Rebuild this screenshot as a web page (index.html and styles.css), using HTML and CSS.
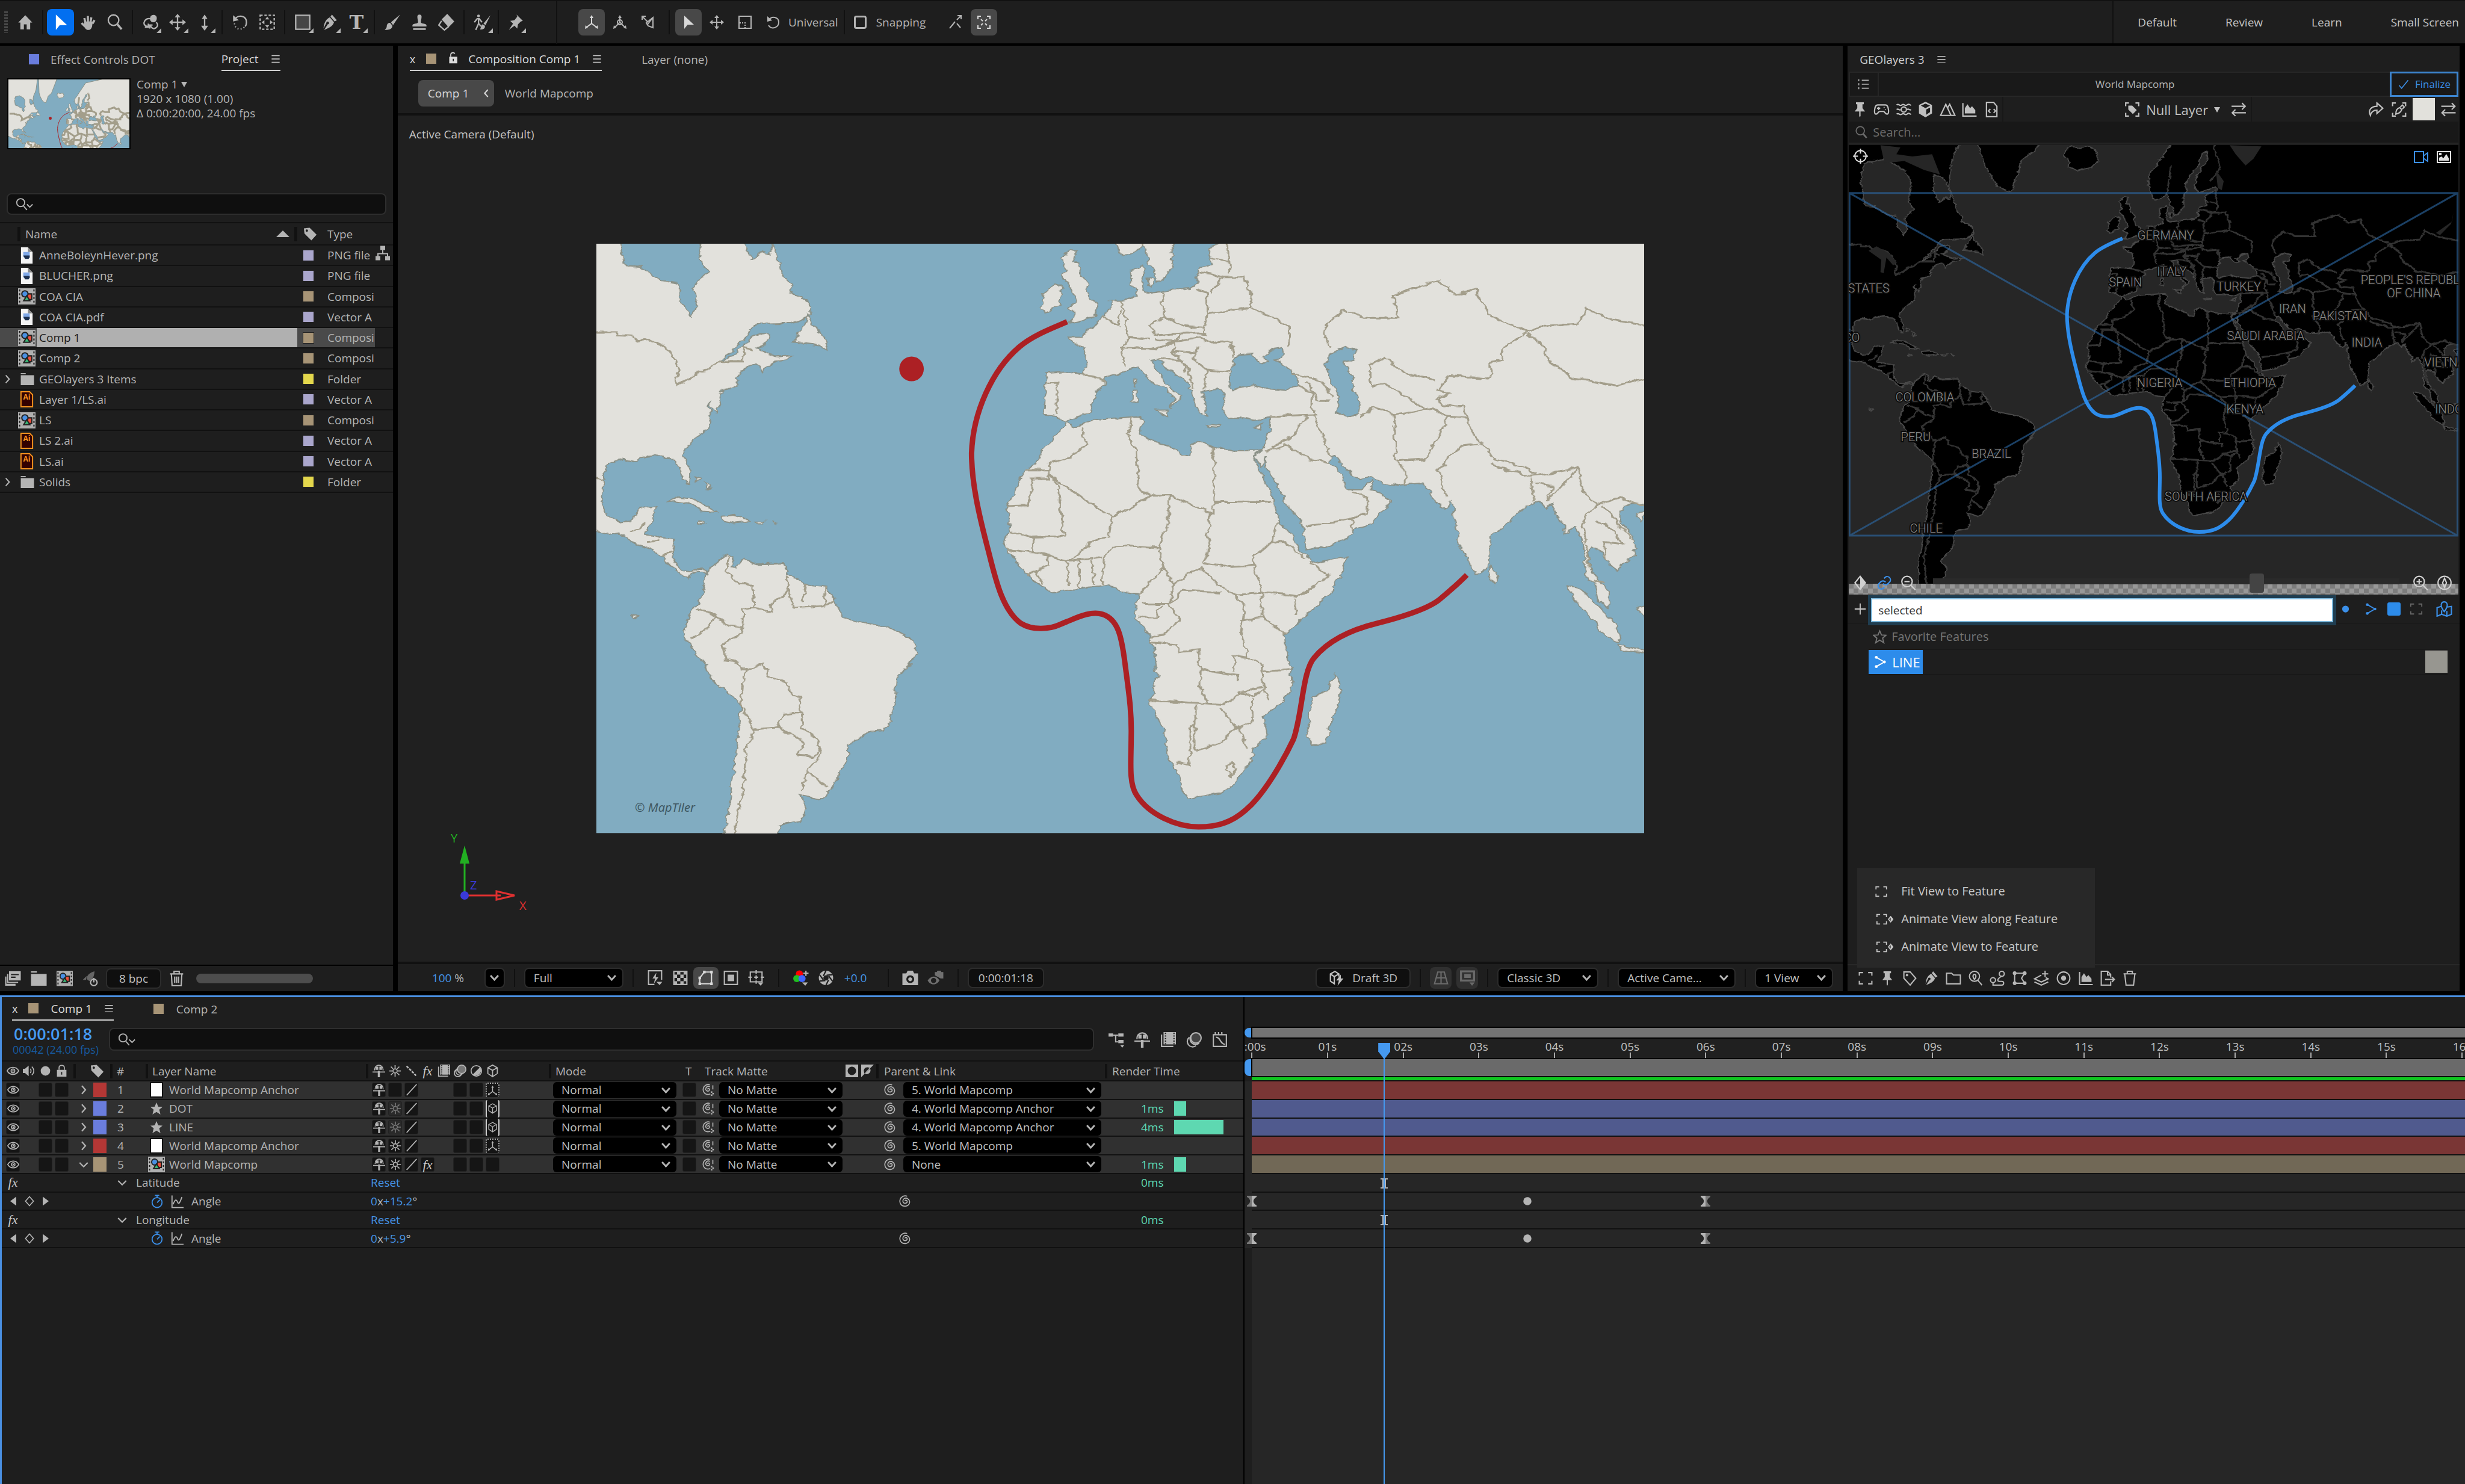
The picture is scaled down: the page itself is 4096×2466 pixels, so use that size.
FILE: index.html
```html
<!DOCTYPE html>
<html lang="en">
<head>
<meta charset="utf-8">
<title>Comp 1</title>
<link rel="stylesheet" href="styles.css">
</head>
<body>
<svg class="sprite" width="0" height="0" aria-hidden="true">
<defs>
<filter id="rough" x="-5%" y="-5%" width="110%" height="110%" color-interpolation-filters="sRGB"><feTurbulence type="fractalNoise" baseFrequency="0.06" numOctaves="3" seed="4" result="n"/><feDisplacementMap in="SourceGraphic" in2="n" scale="12" xChannelSelector="R" yChannelSelector="G"/></filter>
<g id="land" class="geo">
<path class="geo-land" d="M-60,-520 L320,-520 L300,-260 L287,-191 L275,-150 L267,-100 L262,-5 L270,30 L277,70 L283,105 L298,125 L294,150 L312,160 L322,180 L325,205 L310,220 L296,228 L246,230 L235,250 L215,290 L190,328 L205,318 L222,292 L240,262 L258,252 L263,262 L260,280 L243,292 L262,310 L275,315 L296,313 L290,322 L275,325 L262,340 L254,356 L250,340 L243,335 L222,352 L216,370 L216,392 L195,402 L190,415 L192,440 L184,462 L175,430 L178,465 L176,500 L165,515 L142,545 L138,570 L147,612 L146,645 L136,632 L132,605 L125,580 L110,578 L95,570 L72,575 L70,588 L50,580 L30,592 L20,615 L22,650 L18,690 L27,725 L45,745 L62,742 L72,710 L97,702 L92,740 L85,760 L82,775 L122,788 L123,820 L122,845 L135,868 L150,872 L165,862 L174,882 L162,870 L150,878 L145,887 L130,875 L118,855 L105,830 L90,812 L60,795 L45,770 L30,775 L10,768 L-60,700 Z
M320,205 L330,240 L345,265 L348,298 L335,285 L300,278 L305,255 L315,235 Z
M330,-520 L560,-520 L488,-191 L478,-167 L448,-126 L438,-78 L428,-21 L418,19 L387,-5 L367,-54 L347,-126 L337,-191 Z
M560,-180 L575,-185 L590,-175 L615,-185 L632,-170 L638,-120 L620,-90 L585,-78 L563,-95 L565,-120 L553,-140 Z
M112,692 L130,680 L150,682 L175,705 L188,718 L165,715 L150,695 L125,690 Z
M195,728 L215,725 L235,740 L215,746 L195,740 Z M243,742 L258,742 L256,748 L244,748 Z M160,740 L172,743 L170,748 L160,746 Z M270,742 L275,746 L272,750 Z
M155,625 L163,630 L158,640 Z M170,640 L178,652 L172,658 Z M64,982 L71,988 L66,994 Z
M172,875 L185,850 L205,825 L212,832 L208,860 L215,862 L225,840 L245,852 L285,850 L290,875 L315,905 L345,912 L360,940 L365,965 L372,990 L405,1005 L440,1015 L475,1050 L480,1085 L465,1120 L450,1150 L448,1210 L440,1260 L430,1283 L412,1285 L378,1322 L378,1360 L362,1410 L345,1455 L335,1462 L310,1448 L318,1490 L308,1518 L278,1528 L276,1560 L272,1605 L241,1659 L256,1690 L252,1724 L237,1800 L186,1800 L186,1670 L198,1548 L205,1470 L212,1380 L220,1260 L222,1218 L205,1185 L178,1150 L165,1100 L142,1050 L140,1010 L150,970 L165,940 L168,900 Z
M1600,-520 L1200,-520 L900,-400 L820,-191 L790,-110 L765,-54 L768,0 L775,35 L782,55 L800,40 L812,25 L818,60 L828,95 L830,122 L845,110 L853,80 L852,40 L862,20 L858,-20 L872,-60 L890,-100 L900,-150 L912,-160 L915,-130 L900,-90 L885,-50 L882,0 L895,20 L935,-5 L938,8 L912,30 L905,45 L912,75 L895,85 L890,120 L882,138 L845,145 L818,152 L810,135 L812,78 L793,95 L795,130 L803,155 L785,170 L765,170 L765,190 L755,205 L745,225 L738,240 L725,250 L722,265 L702,265 L708,280 L722,290 L728,330 L725,360 L700,355 L670,358 L668,400 L667,465 L682,468 L697,485 L712,472 L735,460 L740,410 L755,390 L755,368 L775,360 L800,345 L807,342 L812,358 L825,380 L845,400 L857,425 L852,450 L868,415 L860,405 L845,385 L828,345 L822,325 L835,322 L845,345 L868,370 L878,385 L885,420 L895,460 L905,470 L902,430 L898,405 L920,400 L932,412 L928,450 L935,475 L960,475 L975,480 L998,470 L998,500 L988,558 L972,572 L986,602 L992,570 L990,600 L1005,640 L1020,690 L1040,735 L1048,770 L1050,815 L1075,808 L1110,785 L1125,760 L1145,750 L1160,720 L1172,690 L1160,665 L1147,660 L1147,635 L1135,658 L1112,658 L1100,615 L1088,595 L1087,575 L1095,572 L1110,610 L1130,632 L1148,624 L1160,642 L1185,648 L1220,642 L1232,660 L1240,690 L1255,710 L1265,690 L1268,740 L1275,800 L1290,850 L1300,880 L1318,860 L1322,775 L1335,765 L1365,715 L1390,690 L1402,705 L1412,695 L1418,730 L1430,750 L1430,775 L1445,755 L1455,790 L1460,850 L1462,890 L1475,900 L1480,945 L1492,965 L1495,935 L1480,895 L1468,870 L1463,820 L1470,808 L1485,820 L1490,845 L1508,870 L1515,850 L1533,830 L1530,780 L1510,740 L1515,705 L1530,695 L1600,698 Z
M705,40 L715,42 L708,70 L720,72 L718,95 L730,130 L732,165 L745,180 L740,210 L722,222 L702,228 L715,205 L702,190 L712,170 L708,145 L695,110 L698,75 L692,60 Z
M680,125 L692,130 L688,185 L668,200 L662,190 L665,155 Z M817,112 L827,115 L825,132 L818,130 Z
M828,452 L846,452 L845,470 Z M796,402 L803,402 L802,435 L796,430 Z M798,370 L802,370 L800,395 Z M905,490 L925,493 L924,498 L906,496 Z M972,500 L988,488 L982,504 Z
M697,485 L712,498 L740,478 L805,470 L812,478 L808,515 L820,530 L848,545 L868,570 L880,572 L882,545 L892,535 L915,550 L945,560 L975,560 L988,555 L972,575 L985,620 L1000,670 L1010,745 L1028,770 L1042,815 L1060,850 L1110,832 L1105,870 L1085,930 L1050,985 L1020,1035 L1022,1090 L1030,1120 L1030,1180 L1010,1215 L988,1245 L993,1300 L972,1330 L970,1360 L940,1430 L925,1445 L880,1458 L868,1440 L865,1400 L848,1350 L840,1280 L822,1210 L832,1140 L828,1070 L820,1035 L800,990 L803,930 L782,925 L762,905 L720,915 L680,925 L650,895 L630,855 L612,815 L610,790 L617,760 L612,710 L625,650 L640,610 L660,580 L668,545 L690,510 Z
M1095,1138 L1102,1185 L1092,1240 L1078,1318 L1062,1320 L1052,1300 L1055,1260 L1060,1195 L1080,1180 Z
M1322,855 L1333,885 L1325,905 L1318,885 Z
M1432,910 L1450,915 L1480,960 L1505,1010 L1510,1055 L1490,1040 L1465,985 L1445,945 Z M1510,1060 L1546,1075 L1560,1085 L1515,1075 Z M1535,965 L1560,955 L1560,1022 Z M1534,725 L1548,712 L1540,745 Z"/>
<path class="geo-sea" d="M48,60 L55,80 L75,82 L108,120 L130,125 L132,165 L140,190 L148,212 L158,185 L152,130 L165,110 L174,95 L160,60 L165,23 L166,-30 L150,-80 L100,-130 L50,-110 L40,-40 Z M222,10 L237,62 L255,40 L265,50 L268,20 L250,-40 L225,-60 Z
M950,310 L972,308 L985,335 L995,328 L985,315 L1000,298 L1015,292 L1018,310 L1006,325 L1035,360 L1038,390 L1020,402 L990,398 L970,388 L940,402 L938,370 L945,340 Z
M1085,310 L1105,292 L1122,298 L1120,325 L1105,330 L1118,365 L1118,400 L1130,435 L1128,465 L1112,472 L1095,460 L1098,415 L1085,370 L1080,335 Z"/>
<path class="geo-line" d="M-20,252 L38,252 L42,260 L62,262 L72,275 L88,270 L112,292 L125,320 L132,350 L126,388 L150,370 L158,355 L172,350 L190,328 L225,328 L228,290 M225,290 L240,300 M10,630 L20,635 M60,770 L82,745 M85,795 L105,790 M105,830 L122,820
M205,830 L200,865 L208,890 L222,903 L240,905 L242,965 L225,970 L224,1030 M242,965 L265,975 L270,950 L285,935 L290,915 L290,880 M290,915 L300,965 L345,960 L345,912 M318,905 L312,950 M345,960 L362,945 M158,968 L185,985 L205,1012 L222,1015 L224,1030 L195,1060 L200,1100 L218,1105 L220,1125 L228,1125 M150,1045 L175,1015 L185,985 M228,1125 L255,1110 L260,1140 L290,1160 L295,1190 L308,1195 L310,1235 M228,1125 L226,1180 L222,1218 L232,1245 L240,1280 L230,1330 L225,1420 L213,1548 L200,1640 L205,1762 M240,1280 L275,1275 L285,1240 L310,1235 L312,1275 L330,1300 L340,1325 L330,1350 L308,1345 L315,1310 L275,1275 M340,1325 L335,1355 L318,1390 L312,1440 M318,1390 L348,1428
M720,500 L728,540 L705,575 L672,590 L672,612 M640,608 L672,608 M672,620 L765,730 L800,700 L822,675 L805,655 L802,560 L790,515 L797,470 M822,675 L850,675 L912,722 M915,550 L915,722 L910,722 L905,830 L898,850 M915,692 L1000,692 M765,730 L762,780 L735,795 L720,820 L700,845 M672,620 L687,645 L695,780 L650,782 L617,770 M672,608 L672,632 L648,632 L648,665 L640,700 L613,702 M850,675 L848,750 L835,810 L800,805 L765,808 L755,830 L752,905 M835,810 L842,860 L805,930 M842,860 L855,905 L850,955 M855,905 L895,860 L925,910 L945,930 L985,925 M898,850 L940,860 L975,855 L975,830 L1000,795 L1020,795 L1050,840 M1000,795 L1010,745 M985,925 L1040,935 L1085,880 L1055,850 M1035,940 L1035,985 M975,855 L985,925 M612,815 L650,822 L672,830 L675,855 L640,880 M672,830 L700,845 L752,835 M700,845 L702,910 M718,840 L718,912 M735,840 L740,905 M650,782 L650,822 M655,870 L665,905 M808,955 L850,955 L870,920 L925,925 M850,955 L865,1000 L840,1035 L822,1040 M805,990 L830,990 L838,960 M945,930 L960,960 L955,1040 L965,1095 L985,1110 L988,1180 L995,1205 M985,925 L985,990 L1020,1035 M955,1000 L985,990 M825,1055 L860,1060 L862,1080 L893,1075 L895,1125 L950,1140 L950,1155 M965,1095 L945,1090 L945,1130 M985,1130 L1028,1125 M895,1125 L895,1175 L908,1215 M822,1205 L930,1215 L955,1185 L975,1195 L990,1170 M950,1185 L985,1170 M887,1215 L887,1270 L880,1270 L880,1370 L860,1365 M887,1335 L920,1320 L950,1275 L972,1260 L972,1200 M887,1270 L887,1335 M925,1225 L950,1275 L965,1330 M932,1385 L940,1365 L948,1380 L940,1400 Z
M838,150 L842,210 L822,235 L830,260 L868,255 L900,255 L905,205 L905,150 L890,140 M842,210 L870,235 L900,240 M778,170 L785,210 L790,265 L822,270 M790,265 L780,300 L785,340 M750,210 L775,235 L778,195 M780,290 L830,295 L860,275 L895,265 L910,280 L940,275 L945,320 M830,270 L860,275 L855,300 L880,350 L885,400 M855,300 L890,305 M868,255 L860,275 M835,320 L870,325 L875,355 M895,290 L885,320 L905,350 L940,355 M905,350 L900,400 M905,205 L940,195 L970,190 L1000,210 L1025,240 L1025,290 M893,95 L930,110 L910,150 M930,110 L960,110 L970,160 L970,190 M910,60 L938,70 M935,0 L938,100 M725,360 L755,378 M685,383 L685,465 M670,383 L688,383 M822,-100 L812,25 M930,-191 L945,-80 L920,-30
M1038,390 L1060,410 L1060,450 L1065,465 L998,470 M1030,358 L1075,380 L1090,420 M1050,380 L1070,430 L1085,430 M1060,465 L1075,520 L1085,575 M1050,470 L1035,515 L1000,550 M1018,540 L1055,580 L1087,590 M992,560 L1020,545 M1120,765 L1115,735 L1050,755 M1115,735 L1140,720 L1140,680 L1118,665 M1130,470 L1150,445 L1180,465 L1182,580 L1195,610 L1195,645 M1182,585 L1225,580 L1245,520 L1258,470 L1235,450 L1180,465 M1085,290 L1075,250 L1085,220 L1105,195 L1135,215 L1185,215 L1180,155 L1245,118 L1270,155 L1298,140 L1320,210 L1375,250 L1340,290 L1338,325 L1320,330 L1320,372 L1260,365 L1245,400 M1375,250 L1400,235 L1450,230 L1460,190 L1500,220 L1580,245 M1375,255 L1400,290 L1405,325 L1440,370 L1505,390 L1580,360 M1145,395 L1145,335 L1165,318 L1200,360 L1240,375 M1145,395 L1165,385 L1225,450 M1258,470 L1290,475 L1290,510 L1310,540 L1325,580 L1378,605 L1385,620 M1240,400 L1262,410 L1240,425 L1250,440 L1280,445 L1290,480 M1320,590 L1330,600 L1378,625 L1405,620 L1450,600 M1380,630 L1385,690 M1385,640 L1412,650 L1405,690 M1305,540 L1275,545 L1245,610 L1255,680 M1450,600 L1455,660 L1475,700 L1510,680 L1546,700 M1405,690 L1425,650 L1450,600 M1475,700 L1455,740 L1465,860 M1475,740 L1500,760 L1515,800 L1488,795 L1490,840 M1485,700 L1530,790 M1470,890 L1488,900"/>
</g>
<path id="route" d="M700,225 C680,240 650,260 630,290 C590,350 562,460 560,565 C560,640 570,720 585,820 C595,890 605,970 632,1005 C650,1025 675,1020 690,1008 C715,990 735,972 752,982 C775,995 780,1040 785,1110 C790,1180 795,1230 794,1300 C794,1360 790,1420 802,1450 C820,1500 860,1532 893,1532 C930,1532 950,1510 970,1475 C995,1430 1020,1350 1032,1305 C1045,1240 1045,1130 1062,1095 C1085,1045 1120,1020 1155,1005 C1200,985 1230,965 1245,945 C1262,920 1275,900 1286,880"/>
</defs>
<symbol id="home" viewBox="0 0 24 24"><path class="f" d="M12 2 2 12.500h3V22h5v-7h4v7h5v-9.500h3z"/></symbol>
<symbol id="cursor" viewBox="0 0 24 24"><path class="f" d="M5 1v22l5.500-7H21z"/></symbol>
<symbol id="hand" viewBox="0 0 24 24"><path class="s3" d="M8.500 13 7 6M12 12V3M15.500 12.500 17 5M18.500 14l3-5M3 13l5 5"/><path class="f" d="M7 11h12l-1 7c-1 3-2.500 5-5.500 5S8 21 6 17z"/></symbol>
<symbol id="zoom" viewBox="0 0 24 24"><circle cx="10" cy="9" r="7.500"/><path class="s3" d="m15.500 15 6 7"/></symbol>
<symbol id="zoomv" viewBox="0 0 34 24"><circle cx="10" cy="9" r="7"/><path d="m15 15 6 7M21 12l5 5 5-5"/></symbol>
<symbol id="orbit" viewBox="0 0 24 24"><path class="f" d="M12 4c2-4 9-3 9 2 0 4-2 6-5 6s-6-3-4-8z"/><path d="M12 7C8 6 4 8 3 12c-1 3 2 6 6 6M20 12c4 3 2 8-3 9-3 0-4-2-5-4M9 14v5H4M11 21v-5h4"/></symbol>
<symbol id="pan" viewBox="0 0 24 24"><path d="M12 4v16M4 12h16"/><path class="f" d="m12 0 4 5H8zM12 24l4-5H8zM0 12l5-4v8zM24 12l-5-4v8z"/></symbol>
<symbol id="dolly" viewBox="0 0 24 24"><path d="M12 3v17"/><path class="f" d="m12 1 4 6H8zM12 24l5-7H7z"/></symbol>
<symbol id="rotate" viewBox="0 0 24 24"><path d="M5 7c4-6 16-5 16 5 0 3-1 5-2 6"/><path class="f" d="M2 2v9l8-2z"/><path stroke-dasharray="1.500 3" d="M18 19c-5 5-14 3-14-6"/></symbol>
<symbol id="undo" viewBox="0 0 24 24"><path d="M5 8c4-7 16-5 16 4s-12 13-17 5"/><path class="f" d="M2 2v9l8-2z"/></symbol>
<symbol id="anchorpt" viewBox="0 0 24 24"><path stroke-dasharray="3.500 2.500" d="M2 2h20v20H2z"/><path class="f" d="m12 4 3 4H9zM12 20l3-4H9zM4 12l4-3v6zM20 12l-4-3v6z"/></symbol>
<symbol id="rect" viewBox="0 0 24 24"><path fill="#454545" d="M2 2h20v20H2z"/></symbol>
<symbol id="pen" viewBox="0 0 24 24"><path class="f" d="M15 1l7 8-3 2-6-7zM12 5l6 7c-2 6-7 8-14 11l5-8a2 2 0 1 0-2-2L3 21C4 13 6 8 12 5z"/></symbol>
<symbol id="brush" viewBox="0 0 24 24"><path class="f" d="M23 1 10 12l3 4zM9 13c-3-1-5 2-5 5 0 2-2 4-3 5 6 0 11-1 11-6z"/></symbol>
<symbol id="stamp" viewBox="0 0 24 24"><path class="f" d="M9 4a3 3 0 1 1 6 0c0 3-1 5-1 8 0 2 8 2 8 4v2H2v-2c0-2 8-2 8-4 0-3-1-5-1-8zM3 20.500h18V23H3z"/></symbol>
<symbol id="eraser" viewBox="0 0 24 24"><path class="f" d="M13 0l10 11-8 8L5 8z"/><path d="m5 10-4 6 8 7 6-5"/></symbol>
<symbol id="roto" viewBox="0 0 24 24"><circle class="f" cx="7" cy="3" r="2"/><path d="M1 12l4-5h3l4 5M7 7v8M7 14l-4 9M8 14l2 4"/><path class="f" d="M24 2 14 14l3 2zM13 15c-3 0-2 5-4 7 4 1 8-1 7-5z"/></symbol>
<symbol id="pin" viewBox="0 0 24 24"><path class="f" d="m14 1 9 9-3 1-4 4-1 6-4-4-8 6 6-9-4-4 6-1 4-5z"/></symbol>
<symbol id="axis" viewBox="0 0 24 24"><path d="M12 14V3M12 14l-8 6M12 14l8 6"/><path class="f" d="m12 0 3 5H9zM1 23l1-6 4 4zM23 23l-1-6-4 4z"/></symbol>
<symbol id="axis2" viewBox="0 0 24 24"><circle cx="12" cy="12" r="4"/><path d="M12 12V3M12 12l-8 8M12 12l8 8"/><path class="f" d="m12 0 3 5H9zM1 23l1-6 4 4zM23 23l-1-6-4 4z"/></symbol>
<symbol id="axis3" viewBox="0 0 24 24"><path d="M3 3l8 8M20 4v17l-8-3-3-5zM2 8V2h6M10 17l10-13"/></symbol>
<symbol id="scalebox" viewBox="0 0 24 24"><path d="M2 2h20v20H2z"/><path stroke-dasharray="2 2" d="M3 13h9v9"/></symbol>
<symbol id="snapvec" viewBox="0 0 24 24"><path d="M14 8l7-7M15 1h6v6M2 22l9-11M14 14l6 7"/></symbol>
<symbol id="snapbox" viewBox="0 0 24 24"><path d="M2 7V2h5M17 2h5v5M22 17v5h-5M7 22H2v-5M7 7l3 3M17 7l-3 3M7 17l3-3M17 17l-3-3"/></symbol>
<symbol id="tag" viewBox="0 0 24 24"><path class="f" fill-rule="evenodd" d="M1 2l10-1 12 12-9 10L2 11zM6 4a2 2 0 1 0 .1 0z"/></symbol>
<symbol id="tree" viewBox="0 0 24 24"><path class="f" d="M8 0h8v7H8zM0 17h8v7H0zM16 17h8v7h-8z"/><path d="M12 7v6M4 18v-5h16v5"/></symbol>
<symbol id="png" viewBox="0 0 20 28"><path fill="#f4f4f4" stroke="none" d="M0 0h12l8 8v20H0z"/><path fill="#8a8a8a" stroke="none" d="M12 0l8 8h-8z"/><path fill="#7fa8e8" stroke="none" d="M4 8h11v9H4z"/><path fill="#1c3050" stroke="none" d="M4 14h11v3l-2 3H7z"/></symbol>
<symbol id="comp" viewBox="0 0 28 26"><path fill="#b0b0b0" stroke="none" d="M0 0h28v26H0z"/><path stroke="#222" stroke-dasharray="3 3" d="M2.500 2v24M25.500 2v24"/><path fill="#f0503c" stroke="#222" d="M14 9h8v9h-6z"/><circle fill="#4a90e2" stroke="#222" cx="11" cy="9" r="5"/><path fill="#3cb878" stroke="#222" d="m14 12 5 8H9z"/></symbol>
<symbol id="ai" viewBox="0 0 22 28"><path fill="#300" stroke="#f7931e" d="M1 1h15l5 5v21H1z"/></symbol>
<symbol id="folder" viewBox="0 0 24 24"><path class="f" d="M0 1h9v2H0zM0 5h24v18H0z"/></symbol>
<symbol id="right" viewBox="0 0 24 24"><path class="s3" d="m8 3 8 9-8 9"/></symbol>
<symbol id="down" viewBox="0 0 24 24"><path class="s3" d="m3 8 9 9 9-9"/></symbol>
<symbol id="left" viewBox="0 0 24 24"><path class="s3" d="m16 3-8 9 8 9"/></symbol>
<symbol id="tri" viewBox="0 0 24 24"><path class="f" d="M2 4h20L12 22z"/></symbol>
<symbol id="triup" viewBox="0 0 24 12"><path class="f" d="M0 12h24L12 0z"/></symbol>
<symbol id="menu" viewBox="0 0 24 24"><path d="M2 4h20M2 12h20M2 20h20"/></symbol>
<symbol id="lockopen" viewBox="0 0 24 24"><path class="f" fill-rule="evenodd" d="M3 10h16v13H3zM10 14v5h2v-5z"/><path d="M6 10V6c0-5 7-5 8-2"/></symbol>
<symbol id="lock" viewBox="0 0 24 24"><path class="f" fill-rule="evenodd" d="M3 10h18v13H3zM11 14v5h2v-5z"/><path d="M7 10V6c0-6 10-6 10 0v4"/></symbol>
<symbol id="interp" viewBox="0 0 24 24"><path class="f" d="M6 1h18v14H6zM3 5h2v12h15v2H3zM0 9h2v11h14v3H0z"/><path stroke="#222" d="M9 6h12M9 10h7"/></symbol>
<symbol id="rocket" viewBox="0 0 24 24"><path fill="#666" stroke="none" d="M18 1c-8 2-12 7-12 12l4 3c5-2 8-8 8-15zM6 8l-6 6h5z"/><circle cx="17" cy="18" r="5"/><path d="M17 11v7"/></symbol>
<symbol id="trash" viewBox="0 0 24 24"><path d="M2 5h20M8 4V1h8v3M4 6l1 17h14l1-17M9 9v10M12 9v10M15 9v10"/></symbol>
<symbol id="bolt" viewBox="0 0 24 24"><path d="M22 15V1H2v21h9"/><path class="f" d="m14 4-6 9h4l-2 8 7-10h-4zM14 18h9l-4 5z"/></symbol>
<symbol id="checker" viewBox="0 0 24 24"><path d="M2 2h20v20H2z"/><path class="f" d="M7 2h5v5H7zM17 2h5v5h-5zM2 7h5v5H2zM12 7h5v5h-5zM7 12h5v5H7zM17 12h5v5h-5zM2 17h5v5H2zM12 17h5v5h-5z"/></symbol>
<symbol id="mask" viewBox="0 0 24 24"><path d="M3 21V12l7-9h11v18z"/><path class="f" d="M1 19h4v4H1zM19 19h4v4h-4zM19 1h4v4h-4zM8 1h4v4H8zM1 10h4v4H1z"/></symbol>
<symbol id="roi" viewBox="0 0 24 24"><path d="M2 2h20v20H2z"/><path class="f" d="M7 7h10v10H7z"/></symbol>
<symbol id="guides" viewBox="0 0 24 24"><path d="M3 3h18v15H3zM12 0v6M12 8v6M12 16v5M0 11h5M9 11h6M19 11h5"/><path class="f" d="M14 19h9l-4 5z"/></symbol>
<symbol id="rgb" viewBox="0 0 24 24"><circle fill="red" stroke="none" cx="10" cy="6" r="5.500"/><circle fill="#1fbf1f" stroke="none" cx="6" cy="13" r="5.500"/><circle fill="#3f66ff" stroke="none" cx="14" cy="13" r="5.500"/><path d="M16 5h8M20 1v8"/><path class="f" d="M14 19h9l-4 5z"/></symbol>
<symbol id="shutter" viewBox="0 0 24 24"><circle class="f" cx="12" cy="12" r="11"/><path stroke="#1e1e1e" d="m12 1-4 8M22 7l-9 1M22 17l-6-8M12 23l4-8M2 17l9-1M2 7l6 8"/><circle cx="12" cy="12" r="4" fill="#1e1e1e" stroke="none"/></symbol>
<symbol id="camera" viewBox="0 0 24 24"><path class="f" fill-rule="evenodd" d="M0 5h6l2-4h8l2 4h6v18H0zM12 8a6 6 0 1 0 .1 0zM12 11a3 3 0 1 1-.1 0z"/></symbol>
<symbol id="showsnap" viewBox="0 0 24 24"><g opacity=".55"><path class="f" fill-rule="evenodd" d="M0 16c5-8 14-8 18 0-4 8-14 8-18 0zM9 12a4 4 0 1 0 .1 0z"/><path class="f" d="M11 3h3l1-2h5l1 2h3v10h-4l-9-5z"/></g></symbol>
<symbol id="cubebolt" viewBox="0 0 24 24"><path d="M9 2 2 6v11l6 4V10l7-4zM2 6l6 4M15 6v4"/><path class="f" d="m18 7-7 9h4l-2 8 9-11h-4z"/></symbol>
<symbol id="ground" viewBox="0 0 24 24"><path d="M7 3h10l5 18H2zM5 12h14M12 3v18"/></symbol>
<symbol id="extview" viewBox="0 0 24 24"><path class="s3" d="M2 2h20v14H2z"/><path class="f" d="M7 6h10v6H7zM15 19h8l-4 5z"/></symbol>
<symbol id="list" viewBox="0 0 24 24"><path d="M8 4h14M8 12h14M8 20h14M2 2v4M2 10v4M2 18v4"/></symbol>
<symbol id="check" viewBox="0 0 24 24"><path d="m3 14 5 6L21 4"/></symbol>
<symbol id="thumbtack" viewBox="0 0 24 24"><path class="f" d="M6 1h12v3h-2v6l4 5H13v7l-1 2-1-2v-7H4l4-5V4H6z"/></symbol>
<symbol id="pad" viewBox="0 0 24 24"><path d="M6 5h12c5 0 6 13 3 14s-4-4-6-4H9c-2 0-3 5-6 4S1 5 6 5zM5 10h5M7.500 8v5M16 8v1M18 11v1"/></symbol>
<symbol id="waves" viewBox="0 0 24 24"><path d="M1 5c4-3 4 3 8 0s4 3 8 0 4 1 6 0M1 19c4-3 4 3 8 0s4 3 8 0 4 1 6 0M1 12c3-2 4 2 6 0M17 12c3-2 4 2 6 0"/><circle cx="12" cy="12" r="4"/></symbol>
<symbol id="cube" viewBox="0 0 24 24"><path class="f" fill-rule="evenodd" d="m12 0 10 5v13l-10 6-10-6V5zM5 6l7 4 7-4-7-3zM13 12v8l6-4V9z"/></symbol>
<symbol id="mount" viewBox="0 0 24 24"><path d="M1 21 9 4l8 17zM12 9l3-5 8 17h-6"/></symbol>
<symbol id="chart" viewBox="0 0 24 24"><path d="M2 2v20h21"/><path class="f" d="M5 18v-8l4-6 4 6 3-3 5 6v5z"/></symbol>
<symbol id="codefile" viewBox="0 0 24 24"><path d="M4 1h11l5 6v16H4zM10 11l-3 3 3 3M15 11l3 3-3 3"/></symbol>
<symbol id="pinbox" viewBox="0 0 24 24"><path d="M2 7V2h5M17 2h5v5M22 17v5h-5M7 22H2v-5"/><path class="f" d="M6 6h6l7 7-6 6-7-7z"/></symbol>
<symbol id="penbox" viewBox="0 0 24 24"><path d="M2 7V2h5M17 2h5v5M22 17v5h-5M7 22H2v-5M7 19c0-6 2-9 6-10l3 3c-1 4-4 6-9 7zM14 8l3-3 3 3-3 3"/></symbol>
<symbol id="swap" viewBox="0 0 24 24"><path d="M1 7h21M17 2l5 5-5 5M23 17H2M7 12l-5 5 5 5"/></symbol>
<symbol id="share" viewBox="0 0 24 24"><path d="M14 2l9 8-9 8v-5C8 13 5 16 4 21 0 13 5 7 14 7z"/></symbol>
<symbol id="cross" viewBox="0 0 24 24"><circle cx="12" cy="12" r="9"/><path d="M12 0v8M12 16v8M0 12h8M16 12h8"/></symbol>
<symbol id="video" viewBox="0 0 24 24"><path d="M1 3h15v18H1zM16 10l7-5v14l-7-5"/></symbol>
<symbol id="image" viewBox="0 0 24 24"><path d="M1 3h22v18H1z"/><path class="f" d="M4 18v-5l4-2 3 3 5-7 4 7v4zM4 5h4v4H4z"/></symbol>
<symbol id="keydia" viewBox="0 0 24 24"><path d="m12 2 8 10-8 10-8-10z"/><path class="f" d="m12 2 8 10-8 10z"/></symbol>
<symbol id="dia" viewBox="0 0 24 24"><path d="m12 3 8 9-8 9-8-9z"/></symbol>
<symbol id="link" viewBox="0 0 24 24"><path d="M10 13a5 5 0 0 0 7.500.5l3-3a5 5 0 0 0-7-7L11.700 5.200M14 11a5 5 0 0 0-7.500-.5l-3 3a5 5 0 0 0 7 7l1.700-1.700"/></symbol>
<symbol id="zin" viewBox="0 0 24 24"><circle cx="10" cy="10" r="8"/><path d="m16 16 7 7M6 10h8M10 6v8"/></symbol>
<symbol id="zout" viewBox="0 0 24 24"><circle cx="10" cy="10" r="8"/><path d="m16 16 7 7M6 10h8"/></symbol>
<symbol id="compass" viewBox="0 0 24 24"><circle cx="12" cy="12" r="10"/><path d="m12 5 3 7-3 7-3-7z"/></symbol>
<symbol id="plus" viewBox="0 0 24 24"><path d="M12 2v20M2 12h20"/></symbol>
<symbol id="node" viewBox="0 0 24 24"><path d="m5 4 14 8-14 8"/><circle class="f" cx="5" cy="4" r="2.500"/><circle class="f" cx="5" cy="20" r="2.500"/><circle class="f" cx="19" cy="12" r="2.500"/></symbol>
<symbol id="frame" viewBox="0 0 24 24"><path d="M2 8V3h6M16 3h6v5M22 16v5h-6M8 21H2v-5"/></symbol>
<symbol id="framekey" viewBox="0 0 34 24"><path d="M2 8V3h6M14 3h6v5M20 16v5h-6M8 21H2v-5M28 7l4 5-4 5-4-5z"/><path class="f" d="m28 6 5 6-5 6z"/></symbol>
<symbol id="mappin" viewBox="0 0 24 24"><path d="M7 8 1 10v13l7-3 8 3 7-3V8l-6 1M8 14v6M16 15v8M12 16c-8-10-4-15 0-15s8 5 0 15z"/></symbol>
<symbol id="star" viewBox="0 0 24 24"><path d="m12 2 3 7 8 .5-6 5 2 8-7-4.500-7 4.500 2-8-6-5L9 9z"/></symbol>
<symbol id="starf" viewBox="0 0 24 24"><path class="f" d="m12 0 3.500 8.500 8.500.5-6.500 5.500L20 24l-8-5-8 5 2.500-9.500L0 9l8.500-.5z"/></symbol>
<symbol id="tagline" viewBox="0 0 24 24"><path d="M3 2h10l9 10-9 11L3 12z"/><circle class="f" cx="8" cy="7" r="2"/></symbol>
<symbol id="folderline" viewBox="0 0 24 24"><path d="M1 4h8l3 3h11v14H1z"/></symbol>
<symbol id="zpin" viewBox="0 0 24 24"><circle cx="10" cy="9" r="8"/><path d="m15 15 7 8M10 14c-4-5-2-8 0-8s4 3 0 8z"/></symbol>
<symbol id="path" viewBox="0 0 24 24"><circle cx="5" cy="15" r="4"/><circle cx="19" cy="5" r="4"/><path d="M5 19v4h14c4 0 4-6 0-6h-4c-4 0-3-5 4-8"/></symbol>
<symbol id="poly" viewBox="0 0 24 24"><path d="M4 4h16l-5 8 5 8H4z"/><circle class="f" cx="4" cy="4" r="3"/><circle class="f" cx="20" cy="4" r="3"/><circle class="f" cx="4" cy="20" r="3"/><circle class="f" cx="20" cy="20" r="3"/></symbol>
<symbol id="stack" viewBox="0 0 24 24"><path d="M12 7 1 13l11 5 11-5-4-2M1 18l11 5 11-5M18 0v10M13 5h10"/></symbol>
<symbol id="target" viewBox="0 0 24 24"><circle cx="12" cy="12" r="10"/><circle class="f" cx="12" cy="12" r="4"/></symbol>
<symbol id="export" viewBox="0 0 24 24"><path d="M17 17v6H2V1h10l5 5v5M12 1v6h5M8 14h15M19 10l4 4-4 4"/></symbol>
<symbol id="bin" viewBox="0 0 24 24"><path d="M2 5h20M8 4V1h8v3M4 6l2 17h12l2-17"/></symbol>
<symbol id="eye" viewBox="0 0 24 24"><path d="M1 12c5-9 17-9 22 0-5 9-17 9-22 0z"/><circle cx="12" cy="12" r="3.500"/><circle class="f" cx="12" cy="12" r="1.500"/></symbol>
<symbol id="sound" viewBox="0 0 24 24"><path class="f" d="M0 8h4l7-6v20l-7-6H0z"/><path d="M14 8c2 2 2 6 0 8M17 4c5 5 5 11 0 16"/></symbol>
<symbol id="dot" viewBox="0 0 24 24"><circle class="f" cx="12" cy="12" r="9"/></symbol>
<symbol id="shy" viewBox="0 0 24 24"><path d="M4 11C3-2 21-2 20 11M0 14h24"/><path class="f" d="M6 4h5v6H6zM13 4h5v6h-5zM10 12h4v12h-4z"/></symbol>
<symbol id="sun" viewBox="0 0 24 24"><circle cx="12" cy="12" r="4"/><path d="M12 1v6M12 17v6M1 12h6M17 12h6M4 4l4 4M20 4l-4 4M4 20l4-4M20 20l-4-4"/></symbol>
<symbol id="slash" viewBox="0 0 24 24"><path d="M22 1 2 23"/></symbol>
<symbol id="bslash" viewBox="0 0 24 24"><path class="s3" stroke-dasharray="5 2" d="m3 3 18 18"/></symbol>
<symbol id="film" viewBox="0 0 24 24"><path class="f" d="M5 0h19v19H5zM1 4h2v17h17v2H1z"/><path stroke="#222" stroke-dasharray="2 2" d="M8 1v18M21 1v18"/></symbol>
<symbol id="blur" viewBox="0 0 24 24"><circle cx="8" cy="16" r="7"/><circle cx="11" cy="13" r="7"/><circle cx="15" cy="9" r="8" fill="#777"/></symbol>
<symbol id="blurline" viewBox="0 0 24 24"><path d="M5 8a8 8 0 1 0 10 13M9 4a8 8 0 1 0 11 13"/><circle cx="15" cy="9" r="8" fill="#444"/></symbol>
<symbol id="adj" viewBox="0 0 24 24"><circle cx="12" cy="12" r="10"/><path class="f" d="M19 5A10 10 0 0 1 5 19z"/></symbol>
<symbol id="box3d" viewBox="0 0 24 24"><path d="m12 1 9 5v11l-9 6-9-6V6zM3 6l9 5 9-5M12 11v12"/></symbol>
<symbol id="spiral" viewBox="0 0 24 24"><path d="M12 12c-1-2 3-3 4 0 1 4-6 6-8 2-2-6 4-10 9-7 7 5 4 14-4 15C5 23 0 16 2 9 4 3 10 0 16 2"/></symbol>
<symbol id="spiralm" viewBox="0 0 24 24"><path d="M11 11c-1-2 3-3 3 0 1 4-5 5-7 1-1-5 4-9 8-6M16 20C7 24 0 17 2 9 4 3 10 0 15 2M21 3v8"/><path class="f" d="M17 15h3v3h-3zM20 18h3v3h-3zM17 21h3v3h-3z"/></symbol>
<symbol id="watch" viewBox="0 0 24 24"><circle cx="12" cy="14" r="9"/><path d="M12 14l5-5M8 1h8M12 1v4"/></symbol>
<symbol id="graph" viewBox="0 0 24 24"><path d="M2 1v22h21M4 17c4-10 6-9 8-4s4 2 8-9"/></symbol>
<symbol id="kleft" viewBox="0 0 24 24"><path class="f" d="M18 3v18L6 12z"/></symbol>
<symbol id="kright" viewBox="0 0 24 24"><path class="f" d="M6 3v18l12-9z"/></symbol>
<symbol id="hour" viewBox="0 0 16 18"><path class="f" d="M0 0h8v18H0v-2C7 12 7 6 0 2z"/><path fill="#777" stroke="none" d="M8 0h8v2c-7 4-7 10 0 14v2H8z"/></symbol>
<symbol id="hour2" viewBox="0 0 16 18"><path fill="#777" stroke="none" d="M0 0h8v18H0v-2C7 12 7 6 0 2z"/><path class="f" d="M8 0h8v2c-7 4-7 10 0 14v2H8z"/></symbol>
<symbol id="flow" viewBox="0 0 24 24"><path class="f" d="M0 2h7v5H0zM15 2h8v5h-8zM15 12h8v5h-8zM18 20h6l-3 4z"/><path d="M7 5h8M11 5v10h4"/></symbol>
<symbol id="grapheditor" viewBox="0 0 24 24"><path d="M2 4h20v18H2zM6 8c8 0 5 10 14 11M5 0v4M10 0v4M15 0v4"/></symbol>
<symbol id="matte1" viewBox="0 0 24 24"><path class="f" fill-rule="evenodd" d="M0 0h24v24H0zM12 4a8 8 0 1 0 .1 0z"/></symbol>
<symbol id="matte2" viewBox="0 0 24 24"><path class="f" fill-rule="evenodd" d="M0 0h24L0 24zM12 5c-5 0-7 4-7 7l1 5 10-11z"/><path class="f" d="M7 17l10-9c3 6-4 13-10 9z"/></symbol>
</svg>

<header class="toolbar panel">
  <span class="grip"></span>
  <button class="tool" aria-label="Home"><svg><use href="#home"/></svg></button><i class="sep"></i>
  <button class="tool active" aria-label="Selection"><svg><use href="#cursor"/></svg></button>
  <button class="tool" aria-label="Hand"><svg><use href="#hand"/></svg></button>
  <button class="tool" aria-label="Zoom"><svg><use href="#zoom"/></svg></button><i class="sep"></i>
  <button class="tool more" aria-label="Orbit"><svg><use href="#orbit"/></svg></button>
  <button class="tool more" aria-label="Pan"><svg><use href="#pan"/></svg></button>
  <button class="tool more" aria-label="Dolly"><svg><use href="#dolly"/></svg></button><i class="sep"></i>
  <button class="tool" aria-label="Rotation"><svg><use href="#rotate"/></svg></button>
  <button class="tool" aria-label="Anchor point"><svg><use href="#anchorpt"/></svg></button><i class="sep"></i>
  <button class="tool more" aria-label="Rectangle"><svg><use href="#rect"/></svg></button>
  <button class="tool more" aria-label="Pen"><svg><use href="#pen"/></svg></button>
  <button class="tool more type-tool">T</button><i class="sep"></i>
  <button class="tool" aria-label="Brush"><svg><use href="#brush"/></svg></button>
  <button class="tool" aria-label="Clone stamp"><svg><use href="#stamp"/></svg></button>
  <button class="tool" aria-label="Eraser"><svg><use href="#eraser"/></svg></button><i class="sep"></i>
  <button class="tool more" aria-label="Roto brush"><svg><use href="#roto"/></svg></button><i class="sep near"></i>
  <button class="tool more" aria-label="Puppet pin"><svg><use href="#pin"/></svg></button>
  <i class="sep tall"></i>
  <div class="tool-options">
    <button class="tool pressed" aria-label="Local axis"><svg><use href="#axis"/></svg></button>
    <button class="tool" aria-label="World axis"><svg><use href="#axis2"/></svg></button>
    <button class="tool" aria-label="View axis"><svg><use href="#axis3"/></svg></button><i class="sep"></i>
    <button class="tool pressed" aria-label="Universal select"><svg><use href="#cursor"/></svg></button>
    <button class="tool" aria-label="Position"><svg><use href="#pan"/></svg></button>
    <button class="tool" aria-label="Scale"><svg><use href="#scalebox"/></svg></button>
    <button class="tool" aria-label="Rotate"><svg><use href="#undo"/></svg></button>
    <span>Universal</span><i class="sep"></i>
    <label class="snap"><input type="checkbox">Snapping</label>
    <button class="tool snapopt" aria-label="Snap edges"><svg><use href="#snapvec"/></svg></button>
    <button class="tool pressed" aria-label="Snap features"><svg><use href="#snapbox"/></svg></button>
  </div>
  <nav class="spaces"><a href="#d">Default</a><a href="#r">Review</a><a href="#l">Learn</a><a href="#s">Small Screen</a></nav>
</header>

<main class="panels">
<section class="project panel">
  <div class="tabs">
    <a class="tab fx-tab" href="#fx"><i class="sw blue"></i>Effect Controls DOT</a>
    <a class="tab on" href="#p">Project<svg class="burger"><use href="#menu"/></svg></a>
  </div>
  <div class="info">
    <svg class="thumb geo-light" viewBox="-34 -475 1463 1452" preserveAspectRatio="none"><rect class="sea" x="-34" y="-475" width="1463" height="1452"/><use href="#land" filter="url(#rough)"/><use class="route thin" href="#route"/><ellipse class="dotmark" cx="472" cy="347" rx="18" ry="32"/></svg>
    <div>Comp 1<svg class="tiny"><use href="#tri"/></svg><br>1920 x 1080 (1.00)<br>Δ 0:00:20:00, 24.00 fps</div>
  </div>
  <div class="search"><svg><use href="#zoomv"/></svg><input type="text" aria-label="Search project"></div>
  <div class="files">
  <table>
    <colgroup><col class="c-name"><col class="c-tag"><col class="c-type"></colgroup>
    <thead><tr><th><span class="hname">Name<svg><use href="#triup"/></svg></span></th><th class="htag"><svg><use href="#tag"/></svg></th><th class="htype">Type</th></tr></thead>
    <tbody>
    <tr><td><div><svg class="ic png"><use href="#png"/></svg>AnneBoleynHever.png</div></td><td><i class="sw lav"></i></td><td>PNG file</td></tr>
    <tr><td><div><svg class="ic png"><use href="#png"/></svg>BLUCHER.png</div></td><td><i class="sw lav"></i></td><td>PNG file</td></tr>
    <tr><td><div><svg class="ic"><use href="#comp"/></svg>COA CIA</div></td><td><i class="sw tan"></i></td><td>Composi</td></tr>
    <tr><td><div><svg class="ic png"><use href="#png"/></svg>COA CIA.pdf</div></td><td><i class="sw lav"></i></td><td>Vector A</td></tr>
    <tr class="sel"><td><div><svg class="ic"><use href="#comp"/></svg><b>Comp 1</b></div></td><td><i class="sw tan"></i></td><td>Composi</td></tr>
    <tr><td><div><svg class="ic"><use href="#comp"/></svg>Comp 2</div></td><td><i class="sw tan"></i></td><td>Composi</td></tr>
    <tr><td><div class="fold"><svg class="arr"><use href="#right"/></svg><svg class="ic"><use href="#folder"/></svg>GEOlayers 3 Items</div></td><td><i class="sw yel"></i></td><td>Folder</td></tr>
    <tr><td><div><span class="ic ai"><svg><use href="#ai"/></svg><b>Ai</b></span>Layer 1/LS.ai</div></td><td><i class="sw lav"></i></td><td>Vector A</td></tr>
    <tr><td><div><svg class="ic"><use href="#comp"/></svg>LS</div></td><td><i class="sw tan"></i></td><td>Composi</td></tr>
    <tr><td><div><span class="ic ai"><svg><use href="#ai"/></svg><b>Ai</b></span>LS 2.ai</div></td><td><i class="sw lav"></i></td><td>Vector A</td></tr>
    <tr><td><div><span class="ic ai"><svg><use href="#ai"/></svg><b>Ai</b></span>LS.ai</div></td><td><i class="sw lav"></i></td><td>Vector A</td></tr>
    <tr><td><div class="fold"><svg class="arr"><use href="#right"/></svg><svg class="ic"><use href="#folder"/></svg>Solids</div></td><td><i class="sw yel"></i></td><td>Folder</td></tr>
    </tbody>
  </table>
  <svg class="flowicon"><use href="#tree"/></svg>
  </div>
  <footer class="pfoot">
    <button class="cell" aria-label="Interpret"><svg><use href="#interp"/></svg></button><button class="cell" aria-label="New folder"><svg><use href="#folder"/></svg></button><button class="cell" aria-label="New comp"><svg><use href="#comp"/></svg></button><button class="cell" aria-label="Acceleration"><svg><use href="#rocket"/></svg></button>
    <button class="box bpc">8 bpc</button>
    <button class="cell bin" aria-label="Delete"><svg><use href="#trash"/></svg></button><i class="scroll"></i>
  </footer>
</section>

<section class="comp panel">
  <div class="tabs">
    <a class="tab on" href="#c"><span class="x">x</span><i class="sw tan"></i><svg class="lk"><use href="#lockopen"/></svg>Composition Comp 1<svg class="burger"><use href="#menu"/></svg></a>
    <a class="tab layer-tab" href="#n">Layer (none)</a>
  </div>
  <div class="crumbs"><button class="crumb">Comp 1<svg><use href="#left"/></svg></button><a href="#w">World Mapcomp</a></div>
  <div class="canvas">
    <span class="camname">Active Camera (Default)</span>
    <div class="view">
      <svg class="geo-light" viewBox="10 23 1536 1525" preserveAspectRatio="none"><rect class="sea" x="10" y="23" width="1536" height="1525"/><use href="#land" filter="url(#rough)"/><use class="route" href="#route"/><ellipse class="dotmark" cx="472" cy="347" rx="18" ry="32"/></svg>
      <span class="credit">© MapTiler</span>
    </div>
    <svg class="gizmo" viewBox="0 0 140 140"><path stroke="#22b022" d="M31 105V40"/><path fill="#22b022" stroke="none" d="m31 22 8 30H23z"/><path stroke="#e03030" d="M31 105h60"/><path stroke="#e03030" fill="none" d="M84 98l30 7-30 7z"/><circle fill="#3a3ad8" stroke="none" cx="31" cy="105" r="7"/><text x="8" y="17" fill="#22b022">Y</text><text x="40" y="95" fill="#3a3ad8">Z</text><text x="122" y="129" fill="#e03030">X</text></svg>
  </div>
  <footer class="cfoot">
    <span class="mag"><b>100</b> %</span>
    <select class="sel-mini" aria-label="Magnification"><option></option></select><i class="sep"></i>
    <select class="sel-full" aria-label="Resolution"><option>Full</option></select><i class="sep"></i>
    <button class="cell" aria-label="Fast previews"><svg><use href="#bolt"/></svg></button><button class="cell" aria-label="Transparency"><svg><use href="#checker"/></svg></button><button class="cell lit" aria-label="Masks"><svg><use href="#mask"/></svg></button><button class="cell" aria-label="Region"><svg><use href="#roi"/></svg></button><button class="cell" aria-label="Guides"><svg><use href="#guides"/></svg></button><i class="sep"></i>
    <button class="cell" aria-label="Channels"><svg><use href="#rgb"/></svg></button><button class="cell" aria-label="Exposure"><svg><use href="#shutter"/></svg></button><b class="expo">+0.0</b><i class="sep"></i>
    <button class="cell" aria-label="Snapshot"><svg><use href="#camera"/></svg></button><button class="cell" aria-label="Show snapshot"><svg><use href="#showsnap"/></svg></button><i class="sep"></i>
    <button class="box time">0:00:01:18</button>
    <span class="grow"></span>
    <button class="box draft"><svg><use href="#cubebolt"/></svg>Draft 3D</button><i class="sep"></i>
    <button class="cell dim" aria-label="Ground plane"><svg><use href="#ground"/></svg></button><button class="cell dim" aria-label="Extended viewer"><svg><use href="#extview"/></svg></button><i class="sep"></i>
    <select class="sel-r" aria-label="Renderer"><option>Classic 3D</option></select><i class="sep"></i>
    <select class="sel-cam" aria-label="Camera"><option>Active Came...</option></select><i class="sep"></i>
    <select class="sel-view" aria-label="Views"><option>1 View</option></select>
  </footer>
</section>

<section class="geo3 panel">
  <div class="tabs"><a class="tab" href="#g">GEOlayers 3<svg class="burger"><use href="#menu"/></svg></a></div>
  <div class="gtitle"><button aria-label="List"><svg><use href="#list"/></svg></button><span>World Mapcomp</span><button class="finalize"><svg><use href="#check"/></svg>Finalize</button></div>
  <div class="gtools">
    <div class="gset"><svg><use href="#thumbtack"/></svg><svg><use href="#pad"/></svg><svg><use href="#waves"/></svg><svg><use href="#cube"/></svg><svg><use href="#mount"/></svg><svg><use href="#chart"/></svg><svg><use href="#codefile"/></svg></div>
    <div class="gnull"><svg><use href="#pinbox"/></svg>Null Layer<svg class="tiny"><use href="#tri"/></svg><svg class="sw-ic"><use href="#swap"/></svg></div>
    <div class="gend"><svg><use href="#share"/></svg><svg><use href="#penbox"/></svg><i></i><svg><use href="#swap"/></svg></div>
  </div>
  <label class="gsearch"><svg><use href="#zoom"/></svg><input type="text" placeholder="Search..."></label>
  <div class="gmap">
    <svg class="geo-dark" viewBox="10 -191 1536 1953" preserveAspectRatio="none"><rect class="sea" x="10" y="-191" width="1536" height="1953"/><use href="#land" filter="url(#rough)"/><path class="lake" d="M60,280 L80,260 L110,290 L130,330 L122,345 L105,310 L98,380 L90,375 L92,320 Z M970,-190 L1050,-185 L1030,-130 L1010,-100 L985,-150 Z M935,-80 L955,-30 L950,10 L940,0 Z M1490,200 L1530,150 L1534,110 L1528,160 L1500,210 Z M90,-190 L140,-180 L130,-150 L170,-140 L220,-150 L240,-60 L200,-80 L150,-120 L100,-110 L95,-150 Z"/><path class="frameline" d="M12,23 H1544 V1548 H12 Z M12,23 L1544,1548 M1544,23 L12,1548"/><use class="route blue" href="#route"/></svg>
    <svg class="names"><text x="52%" y="20.6%">GERMANY</text><text x="45.4%" y="31.3%">SPAIN</text><text x="53%" y="28.8%">ITALY</text><text x="64%" y="32.2%">TURKEY</text><text class="st" x="84%" y="30.7%">PEOPLE'S REPUBLIC</text><text x="92.7%" y="33.8%">OF CHINA</text><text class="en" x="6.7%" y="32.7%">STATES</text><text x="72.8%" y="37.3%">IRAN</text><text x="80.6%" y="38.9%">PAKISTAN</text><text x="68.4%" y="43.5%">SAUDI ARABIA</text><text x="85%" y="45%">INDIA</text><text class="st" x="94.4%" y="49.5%">VIETNAM</text><text x="51%" y="54.2%">NIGERIA</text><text x="65.8%" y="54.2%">ETHIOPIA</text><text x="65%" y="60.2%">KENYA</text><text class="st" x="96.2%" y="60.2%">INDONESIA</text><text x="12.5%" y="57.5%">COLOMBIA</text><text x="11%" y="66.5%">PERU</text><text x="23.4%" y="70.4%">BRAZIL</text><text x="58.6%" y="80.1%">SOUTH AFRICA</text><text x="12.7%" y="87.4%">CHILE</text><text class="en" x="1.8%" y="43.9%">MEXICO</text></svg>
    <svg class="ov tl"><use href="#cross"/></svg>
    <div class="ov tr"><svg class="bl"><use href="#video"/></svg><svg><use href="#image"/></svg></div>
  </div>
  <div class="gzoom"><svg><use href="#keydia"/></svg><svg class="bl"><use href="#link"/></svg><svg><use href="#zout"/></svg><input type="range" min="0" max="100" value="70" aria-label="Map zoom"><svg><use href="#zin"/></svg><svg><use href="#compass"/></svg></div>
  <div class="gfilter"><svg><use href="#plus"/></svg><input type="text" value="selected" aria-label="Filter features"><svg class="bl sm"><use href="#dot"/></svg><svg class="bl"><use href="#node"/></svg><i class="sq"></i><svg class="mute"><use href="#frame"/></svg><svg class="bl big"><use href="#mappin"/></svg></div>
  <ul class="feats">
    <li class="fav"><svg><use href="#star"/></svg>Favorite Features</li>
    <li><button class="line"><svg><use href="#node"/></svg>LINE</button><i></i></li>
  </ul>
  <div class="grow"></div>
  <div class="gfoot">
    <menu class="popup"><li><svg><use href="#frame"/></svg>Fit View to Feature</li><li><svg class="wide"><use href="#framekey"/></svg>Animate View along Feature</li><li><svg class="wide"><use href="#framekey"/></svg>Animate View to Feature</li></menu>
    <svg><use href="#frame"/></svg><svg><use href="#thumbtack"/></svg><svg><use href="#tagline"/></svg><svg><use href="#pen"/></svg><svg><use href="#folderline"/></svg><svg><use href="#zpin"/></svg><svg><use href="#path"/></svg><svg><use href="#poly"/></svg><svg><use href="#stack"/></svg><svg><use href="#target"/></svg><svg><use href="#chart"/></svg><svg><use href="#export"/></svg><svg><use href="#bin"/></svg>
  </div>
</section>
</main>

<section class="timeline">
<div class="tl-left">
  <div class="tabs">
    <a class="tab on" href="#c1"><span class="x">x</span><i class="sw tan"></i>Comp 1<svg class="burger"><use href="#menu"/></svg></a>
    <a class="tab c2" href="#c2"><i class="sw tan"></i>Comp 2</a>
  </div>
  <div class="tl-top">
    <div class="clock"><b>0:00:01:18</b><small>00042 (24.00 fps)</small></div>
    <div class="search"><svg><use href="#zoomv"/></svg><input type="text" aria-label="Search layers"></div>
    <div class="tl-btns"><svg><use href="#flow"/></svg><svg><use href="#shy"/></svg><svg><use href="#film"/></svg><svg><use href="#blurline"/></svg><svg><use href="#grapheditor"/></svg></div>
  </div>
  <div class="lrow head">
    <div class="av"><svg><use href="#eye"/></svg><svg><use href="#sound"/></svg><svg><use href="#dot"/></svg><svg><use href="#lock"/></svg></div>
    <div class="lab"><svg><use href="#tag"/></svg></div><div class="num">#</div><div class="nm">Layer Name</div>
    <div class="swi"><svg><use href="#shy"/></svg><svg><use href="#sun"/></svg><svg><use href="#bslash"/></svg><em>fx</em><svg><use href="#film"/></svg><svg><use href="#blur"/></svg><svg><use href="#adj"/></svg><svg><use href="#box3d"/></svg></div>
    <div class="mode">Mode</div><div class="tt">T</div><div class="trk"><span>Track Matte</span><svg><use href="#matte1"/></svg><svg><use href="#matte2"/></svg></div><div class="par">Parent &amp; Link</div><div class="ren">Render Time</div>
  </div>
  <div class="rows">
    <div class="lrow layer">
      <div class="av"><i class="well"><svg><use href="#eye"/></svg></i><i></i><i class="well"></i><i class="well"></i></div>
      <div class="lab"><svg><use href="#right"/></svg><i class="sw red"></i></div><div class="num">1</div><div class="nm"><i class="null"></i>World Mapcomp Anchor</div>
      <div class="swi"><i class="well"><svg><use href="#shy"/></svg></i><i class="well"></i><i class="well"><svg><use href="#slash"/></svg></i><i></i><i></i><i class="well"></i><i class="well"></i><i class="well dotted"><svg><use href="#axis"/></svg></i></div>
      <div class="mode"><select aria-label="Mode"><option>Normal</option></select></div><div class="tt"><i class="well"></i></div><div class="trk"><svg><use href="#spiralm"/></svg><select aria-label="Track matte"><option>No Matte</option></select></div><div class="par"><svg><use href="#spiral"/></svg><select aria-label="Parent"><option>5. World Mapcomp</option></select></div><div class="ren"></div>
    </div>
    <div class="lrow layer">
      <div class="av"><i class="well"><svg><use href="#eye"/></svg></i><i></i><i class="well"></i><i class="well"></i></div>
      <div class="lab"><svg><use href="#right"/></svg><i class="sw blue"></i></div><div class="num">2</div><div class="nm"><svg><use href="#starf"/></svg>DOT</div>
      <div class="swi"><i class="well"><svg><use href="#shy"/></svg></i><i class="well faint"><svg><use href="#sun"/></svg></i><i class="well"><svg><use href="#slash"/></svg></i><i></i><i></i><i class="well"></i><i class="well"></i><i class="well solid"><svg><use href="#box3d"/></svg></i></div>
      <div class="mode"><select aria-label="Mode"><option>Normal</option></select></div><div class="tt"><i class="well"></i></div><div class="trk"><svg><use href="#spiralm"/></svg><select aria-label="Track matte"><option>No Matte</option></select></div><div class="par"><svg><use href="#spiral"/></svg><select aria-label="Parent"><option>4. World Mapcomp Anchor</option></select></div><div class="ren"><span>1ms</span><i style="width:20px"></i></div>
    </div>
    <div class="lrow layer">
      <div class="av"><i class="well"><svg><use href="#eye"/></svg></i><i></i><i class="well"></i><i class="well"></i></div>
      <div class="lab"><svg><use href="#right"/></svg><i class="sw blue"></i></div><div class="num">3</div><div class="nm"><svg><use href="#starf"/></svg>LINE</div>
      <div class="swi"><i class="well"><svg><use href="#shy"/></svg></i><i class="well faint"><svg><use href="#sun"/></svg></i><i class="well"><svg><use href="#slash"/></svg></i><i></i><i></i><i class="well"></i><i class="well"></i><i class="well solid"><svg><use href="#box3d"/></svg></i></div>
      <div class="mode"><select aria-label="Mode"><option>Normal</option></select></div><div class="tt"><i class="well"></i></div><div class="trk"><svg><use href="#spiralm"/></svg><select aria-label="Track matte"><option>No Matte</option></select></div><div class="par"><svg><use href="#spiral"/></svg><select aria-label="Parent"><option>4. World Mapcomp Anchor</option></select></div><div class="ren"><span>4ms</span><i style="width:82px"></i></div>
    </div>
    <div class="lrow layer">
      <div class="av"><i class="well"><svg><use href="#eye"/></svg></i><i></i><i class="well"></i><i class="well"></i></div>
      <div class="lab"><svg><use href="#right"/></svg><i class="sw red"></i></div><div class="num">4</div><div class="nm"><i class="null"></i>World Mapcomp Anchor</div>
      <div class="swi"><i class="well"><svg><use href="#shy"/></svg></i><i class="well"><svg><use href="#sun"/></svg></i><i class="well"><svg><use href="#slash"/></svg></i><i></i><i></i><i class="well"></i><i class="well"></i><i class="well dotted"><svg><use href="#axis"/></svg></i></div>
      <div class="mode"><select aria-label="Mode"><option>Normal</option></select></div><div class="tt"><i class="well"></i></div><div class="trk"><svg><use href="#spiralm"/></svg><select aria-label="Track matte"><option>No Matte</option></select></div><div class="par"><svg><use href="#spiral"/></svg><select aria-label="Parent"><option>5. World Mapcomp</option></select></div><div class="ren"></div>
    </div>
    <div class="lrow layer">
      <div class="av"><i class="well"><svg><use href="#eye"/></svg></i><i></i><i class="well"></i><i class="well"></i></div>
      <div class="lab"><svg><use href="#down"/></svg><i class="sw tan"></i></div><div class="num">5</div><div class="nm"><svg class="cic"><use href="#comp"/></svg>World Mapcomp</div>
      <div class="swi"><i class="well"><svg><use href="#shy"/></svg></i><i class="well"><svg><use href="#sun"/></svg></i><i class="well"><svg><use href="#slash"/></svg></i><i class="well"><em>fx</em></i><i></i><i class="well"></i><i class="well"></i><i class="well"></i></div>
      <div class="mode"><select aria-label="Mode"><option>Normal</option></select></div><div class="tt"><i class="well"></i></div><div class="trk"><svg><use href="#spiralm"/></svg><select aria-label="Track matte"><option>No Matte</option></select></div><div class="par"><svg><use href="#spiral"/></svg><select aria-label="Parent"><option>None</option></select></div><div class="ren"><span>1ms</span><i style="width:20px"></i></div>
    </div>
    <div class="lrow"><div class="av"><em>fx</em></div><div class="prop"><svg><use href="#down"/></svg>Latitude</div><div class="val">Reset</div><div class="ren"><span>0ms</span></div></div>
    <div class="lrow"><div class="av"><svg><use href="#kleft"/></svg><svg><use href="#dia"/></svg><svg><use href="#kright"/></svg></div><div class="prop sub"><svg class="bl"><use href="#watch"/></svg><svg><use href="#graph"/></svg>Angle</div><div class="val">0<s>x</s>+15.2<s>°</s></div><div class="whip"><svg><use href="#spiral"/></svg></div></div>
    <div class="lrow"><div class="av"><em>fx</em></div><div class="prop"><svg><use href="#down"/></svg>Longitude</div><div class="val">Reset</div><div class="ren"><span>0ms</span></div></div>
    <div class="lrow"><div class="av"><svg><use href="#kleft"/></svg><svg><use href="#dia"/></svg><svg><use href="#kright"/></svg></div><div class="prop sub"><svg class="bl"><use href="#watch"/></svg><svg><use href="#graph"/></svg>Angle</div><div class="val">0<s>x</s>+5.9<s>°</s></div><div class="whip"><svg><use href="#spiral"/></svg></div></div>
  </div>
</div>
<div class="tl-right">
  <div class="nav"><i></i></div>
  <div class="ruler"><span>0:00s</span><span>01s</span><span>02s</span><span>03s</span><span>04s</span><span>05s</span><span>06s</span><span>07s</span><span>08s</span><span>09s</span><span>10s</span><span>11s</span><span>12s</span><span>13s</span><span>14s</span><span>15s</span><span>16s</span></div>
  <div class="work"><i></i></div>
  <div class="cache"></div>
  <div class="rows tracks">
    <div class="t-red"></div><div class="t-blue"></div><div class="t-blue"></div><div class="t-red"></div><div class="t-tan"></div>
    <div><b class="ibeam" style="left:10.9%"></b></div>
    <div><svg style="left:0"><use href="#hour2"/></svg><svg style="left:22.7%"><use href="#dot"/></svg><svg style="left:37.4%"><use href="#hour"/></svg></div>
    <div><b class="ibeam" style="left:10.9%"></b></div>
    <div><svg style="left:0"><use href="#hour2"/></svg><svg style="left:22.7%"><use href="#dot"/></svg><svg style="left:37.4%"><use href="#hour"/></svg></div>
  </div>
  <div class="below"></div>
  <div class="playhead"><i style="left:10.9%"></i></div>
</div>
</section>
</body>
</html>
```
FILE: styles.css
```css
* { box-sizing: border-box; }
body {
  margin: 0; height: 100vh; background: #000; color: #b4b4b4; overflow: hidden;
  font: 19px/24px "Open Sans", "Noto Sans", sans-serif;
  display: grid; grid-template-rows: 72px minmax(0, 1570fr) minmax(0, 813fr); row-gap: 7px;
}
a { color: inherit; text-decoration: none; }
button, input, select { font: inherit; color: inherit; border: 0; background: none; padding: 0; margin: 0; }
svg { flex: none; fill: none; stroke: currentColor; stroke-width: 2; display: block; overflow: visible; }
i { font-style: normal; flex: none; }
em { font: italic 22px/24px "Liberation Serif", serif; text-align: center; color: #c8c8c8; }
s { text-decoration: none; color: #b4b4b4; }
.f { fill: currentColor; stroke: none; }
.s3 { stroke-width: 3; }
.sprite { position: absolute; }
.panel { background: #1e1e1e; min-width: 0; }
.grow { flex: 1; }
.bl { color: #3b8fe8; }
.sep { width: 2px; height: 40px; background: #111; }

/* maps */
.geo path { vector-effect: non-scaling-stroke; }
.geo-land { fill: var(--land); stroke: var(--edge); }
.geo-sea { fill: var(--water); stroke: var(--edge); }
.geo-line { fill: none; stroke: var(--line); stroke-width: 3px; }
.geo-light { --land: #e2e1dc; --water: #81acc1; --edge: #8b9187; --line: #a39e8b; }
.geo-dark { --land: #000; --water: #262626; --edge: #484848; --line: #333; }
.sea { fill: var(--water); stroke: none; }
.lake { fill: #262626; stroke: none; }
#route { vector-effect: non-scaling-stroke; }
.route { stroke: #ac2024; stroke-width: 9px; }
.route.thin { stroke-width: 1px; }
.route.blue { stroke: #2d8ceb; stroke-width: 6px; }
.dotmark { fill: #ac2024; stroke: none; }
.frameline { stroke: #2d6aa8; stroke-opacity: .6; stroke-width: 3px; vector-effect: non-scaling-stroke; }

/* toolbar */
.toolbar { display: flex; align-items: center; padding: 0 10px 0 7px; border-top: 2px solid #111; }
.grip { width: 6px; height: 36px; margin-right: 6px; background: repeating-linear-gradient(#555 0 2px, transparent 2px 5px); }
.tool { width: 45px; height: 44px; display: grid; place-items: center; position: relative; border-radius: 8px; }
.tool svg { width: 28px; height: 28px; }
.toolbar .sep { margin: 0 6px; }
.toolbar .near { margin: 0 4px; }
.toolbar .tall { height: 72px; margin: 0 35px 0 46px; }
.tool.active { background: #026ff0; color: #fff; }
.tool.pressed { background: #484848; color: #d8d8d8; }
.more::after { content: ""; position: absolute; right: 4px; bottom: 4px; border: 4px solid; border-color: transparent #b4b4b4 #b4b4b4 transparent; }
.type-tool { font: bold 32px/40px "DejaVu Serif", serif; }
.tool-options { display: flex; align-items: center; }
.tool-options .tool { width: 44px; margin-right: 3px; }
.tool-options .sep { margin: 0 9px; }
.tool-options .tool svg { width: 24px; height: 26px; }
.snap { display: flex; align-items: center; gap: 16px; }
.snap input { appearance: none; width: 21px; height: 22px; border: 3px solid #b4b4b4; border-radius: 4px; margin-left: 6px; }
.tool-options .snapopt { margin-left: 28px; }
.spaces { margin-left: auto; display: flex; gap: 81px; align-items: center; height: 100%; border-left: 2px solid #111; padding-left: 40px; color: #c4c4c4; }

.panels { display: grid; grid-template-columns: 653fr 2402fr 1017fr; column-gap: 8px; padding-right: 9px; margin-top: -3px; min-height: 0; }
.panels > section { display: flex; flex-direction: column; min-height: 0; }

/* tabs */
.tabs { display: flex; height: 42px; align-items: flex-start; }
.tab { display: flex; align-items: center; height: 42px; padding-top: 3px; }
.tab.on { color: #dcdcdc; border-bottom: 2px solid #d0d0d0; }
.burger { width: 16px; height: 16px; margin-left: 20px; }
.sw { width: 19px; height: 19px; border: 1px solid #222; display: block; }
.sw.blue { background: #6a7ddd; }
.sw.tan { background: #a79476; }
.sw.red { background: #b43735; }
.sw.lav { background: #aaa6cc; }
.sw.yel { background: #e3d74c; }
.x { font-size: 18px; }
.tiny { width: 12px; height: 14px; display: inline-block; margin-left: 5px; }

/* project */
.project .fx-tab { margin-left: 47px; gap: 18px; }
.project .on { margin-left: 110px; }
.info { display: flex; gap: 10px; margin: 10px 0 0 12px; height: 120px; }
.thumb { width: 205px; height: 118px; margin-top: 2px; border: 2px solid #000; overflow: hidden; stroke-width: 1px; }
.search { display: flex; align-items: center; height: 36px; background: #0f0f0f; border: 2px solid #2e2e2e; border-radius: 8px; padding-left: 12px; }
.search svg { width: 32px; height: 23px; }
.search input { flex: 1; min-width: 0; height: 100%; }
.project .search { margin: 73px 11px 12px; }
.files { position: relative; }
.flowicon { position: absolute; right: 5px; top: 39px; width: 24px; height: 25px; }
table { width: 100%; height: 450px; border-collapse: collapse; table-layout: fixed; border-top: 2px solid #111; }
.c-name { width: 494px; }
.c-tag { width: 46px; }
th, td { padding: 0; text-align: left; font-weight: 400; overflow: hidden; white-space: nowrap; border-bottom: 2px solid #111; }
th { height: 37px; }
tbody td { height: 34px; }
.hname { display: flex; align-items: center; justify-content: space-between; margin-left: 29px; padding: 0 8px; border-left: 5px solid #111; border-right: 5px solid #111; }
.hname svg { width: 22px; height: 11px; }
.htag svg { width: 23px; height: 24px; margin-left: 10px; }
.htype { padding-left: 4px; }
td > div { display: flex; align-items: center; height: 29px; padding-left: 30px; }
td .ic { width: 29px; height: 27px; margin-right: 6px; display: block; }
td .ai { position: relative; }
td .ai svg { width: 29px; height: 27px; }
td .ai b { position: absolute; inset: 0; text-align: center; font: bold 12px/20px "Open Sans", sans-serif; color: #f7931e; }
td .fold { padding-left: 0; }
td .arr { width: 17px; height: 20px; margin: 0 9px 0 4px; stroke-width: 3; }
td .fold .ic { width: 25px; height: 22px; margin: 0 7px 0 3px; }
td .sw { margin-left: 9px; }
td:last-child { padding-left: 4px; }
tbody tr td:last-child { position: relative; }
tbody tr td:last-child::after { content: ""; position: absolute; right: 0; top: 0; bottom: -2px; width: 30px; background: #1e1e1e; }
.sel td { background: #4a4a4a; }
.sel b { font-weight: 400; background: #b0b0b0; color: #1a1a1a; flex: 1; height: 33px; line-height: 33px; padding-left: 4px; margin-left: -4px; }
.pfoot { margin-top: auto; display: flex; align-items: center; height: 44px; border-top: 2px solid #000; }
.cell { width: 42px; height: 36px; display: grid; place-items: center; border-radius: 8px; flex: none; }
.cell svg { width: 27px; height: 26px; }
.pfoot .cell { width: 43px; }
.pfoot .bin { width: 50px; }
.box { background: #0f0f0f; border: 2px solid #2c2c2c; border-radius: 8px; height: 34px; color: #c0c0c0; }
.bpc { width: 92px; margin-left: 4px; }
.scroll { width: 194px; height: 16px; border-radius: 8px; background: #4d4d4d; margin-left: 8px; }

/* composition */
.comp .on { margin-left: 20px; }
.comp .x { margin-right: 17px; }
.comp .lk { width: 20px; height: 22px; margin: 0 14px 4px 18px; }
.layer-tab { margin-left: 66px; }
.crumbs { display: flex; align-items: center; gap: 18px; height: 74px; padding: 4px 0 0 34px; border-bottom: 4px solid #111; }
.crumbs a { color: #b4b4b4; }
.crumb { display: flex; align-items: center; justify-content: space-between; background: #484848; color: #d8d8d8; border-radius: 8px; width: 126px; height: 44px; padding: 0 5px 0 16px; }
.crumb svg { width: 16px; height: 20px; }
.canvas { flex: 1; min-height: 0; background: #202020; display: grid; place-items: center; position: relative; }
.camname { position: absolute; left: 19px; top: 19px; color: #c4c4c4; }
.view { width: 72.5%; aspect-ratio: 16 / 9; position: relative; }
.view > svg { width: 100%; height: 100%; overflow: hidden; }
.credit { position: absolute; left: 64px; bottom: 31px; font: italic 20px/24px "Noto Sans", sans-serif; color: #3f5863; }
.gizmo { position: absolute; left: 80px; bottom: 75px; width: 140px; height: 140px; stroke-width: 3; }
.gizmo text { font-size: 20px; stroke: none; }
.cfoot { display: flex; align-items: center; height: 49px; border-top: 4px solid #111; padding: 0 16px 0 57px; flex: none; }
.cfoot .sep { height: 30px; margin: 0 15px; }
.mag { width: 87px; white-space: pre; }
.mag b, .expo { font-weight: 400; color: #4594e8; }
.expo { width: 37px; margin: 0 20px 0 9px; }
select { appearance: none; color: #c0c0c0; background: #000 url("data:image/svg+xml,%3Csvg xmlns='http://www.w3.org/2000/svg' viewBox='0 0 24 24'%3E%3Cpath d='m3 7 9 10 9-10' fill='none' stroke='%23b4b4b4' stroke-width='4'/%3E%3C/svg%3E") no-repeat right 9px center / 17px 17px; border-radius: 8px; }
.cfoot select { height: 34px; border: 2px solid #2c2c2c; padding-left: 14px; }
.cfoot .sel-mini { width: 34px; background-position: center; padding: 0; }
.sel-full { width: 165px; }
.sel-r { width: 168px; }
.sel-cam { width: 196px; }
.sel-view { width: 130px; }
.lit { background: #484848; color: #d8d8d8; }
.time { width: 127px; }
.draft { width: 158px; display: flex; align-items: center; justify-content: center; gap: 12px; }
.draft svg { width: 27px; height: 26px; }
.dim { width: 36px; background: #303030; color: #6a6a6a; }
.dim + .dim { margin-left: 8px; }

/* GEOlayers */
.geo3 .tabs { height: 43px; padding-left: 20px; color: #d0d0d0; }
.gtitle { display: flex; align-items: center; height: 42px; margin: 0 2px; background: #191919; border: 2px solid #262626; font-size: 17px; }
.gtitle > button { width: 48px; height: 38px; display: grid; place-items: center; border-right: 2px solid #262626; }
.gtitle svg { width: 20px; height: 20px; }
.gtitle span { flex: 1; text-align: center; }
.gtitle .finalize { width: 114px; height: 42px; border: 3px solid #3d85cf; color: #3b8fe8; display: flex; align-items: center; justify-content: center; gap: 9px; margin: -2px; }
.gtools { display: flex; height: 41px; align-items: center; font-size: 22px; color: #c0c0c0; }
.gtools svg { width: 27px; height: 26px; }
.gset { display: grid; grid-template-columns: repeat(7, 1fr); width: 259px; height: 100%; place-items: center; border-right: 2px solid #181818; padding-left: 2px; }
.gnull { display: flex; align-items: center; height: 100%; padding-right: 6px; margin-left: 200px; gap: 9px; border-right: 2px solid #181818; }
.gnull svg { width: 28px; }
.gtools .tiny { width: 12px; height: 14px; margin: 0; }
.gnull .sw-ic { margin-left: 7px; }
.gend { display: flex; align-items: center; gap: 12px; padding-right: 5px; margin-left: auto; }
.gend i { width: 37px; height: 37px; background: #e2e1dc; margin: 0 -3px; }
.gsearch { display: flex; align-items: center; gap: 8px; height: 37px; margin: 0 2px; background: #181818; border-bottom: 2px solid #242424; padding-left: 10px; color: #6c6c6c; font-size: 20px; }
.gsearch svg { width: 22px; height: 24px; }
.gsearch input { flex: 1; }
.gsearch input::placeholder { color: #6c6c6c; }
.gmap { position: relative; margin: 2px 2px 0; aspect-ratio: 1013 / 729; overflow: hidden; flex: none; }
.geo-dark, .names { position: absolute; inset: 0; width: 100%; height: 100%; overflow: hidden; }
.names text { font: 300 20px "Roboto", sans-serif; fill: #8c8c8c; stroke: #0c0c0c; stroke-width: 4px; paint-order: stroke; text-anchor: middle; dominant-baseline: central; }
.names .st { text-anchor: start; }
.names .en { text-anchor: end; }
.ov { position: absolute; color: #e0e0e0; }
.tl { left: 7px; top: 6px; width: 25px; height: 25px; }
.tr { right: 11px; top: 8px; display: flex; gap: 12px; }
.tr svg { width: 26px; height: 24px; }
.gzoom { display: flex; align-items: center; gap: 14px; height: 40px; margin: -21px 2px 0; padding: 0 10px 0 6px; position: relative; color: #d0d0d0; flex: none; }
.gzoom::before { content: ""; position: absolute; inset: 21px 0 1px; background: repeating-conic-gradient(#989898 0 25%, #7c7c7c 0 50%) 0 0 / 16px 16px; }
.gzoom svg, .gzoom input { position: relative; }
.gzoom svg { width: 26px; height: 27px; }
.gzoom input { flex: 1; appearance: none; height: 32px; margin: 0 8px 0 14px; background: linear-gradient(#2a2a2a, #2a2a2a) 0 8px / 100% 10px no-repeat; }
.gzoom input::-webkit-slider-thumb { appearance: none; width: 24px; height: 32px; border-radius: 4px; background: #444; }
.gfilter { display: flex; align-items: center; height: 48px; padding: 0 12px 0 10px; color: #c8c8c8; border-bottom: 2px solid #1a1a1a; flex: none; }
.gfilter svg { width: 22px; height: 24px; }
.gfilter input { flex: 1; min-width: 0; height: 40px; margin: 4px 13px 0 7px; background: #fff; color: #333; border: 2px solid #7db8dc; outline: 5px solid #1f3d50; padding-left: 10px; }
.gfilter .sm { width: 15px; }
.gfilter .sm + svg { margin: 0 16px 0 24px; }
.sq { width: 22px; height: 22px; background: #2d8ceb; border-radius: 3px; }
.gfilter .mute { color: #666; margin: 0 22px 0 15px; }
.gfilter .big { width: 27px; height: 26px; }
.feats { list-style: none; margin: 0; padding: 2px 20px 0 35px; font-size: 20px; }
.feats li { display: flex; align-items: center; justify-content: space-between; height: 42px; border-bottom: 2px solid #191919; }
.feats .fav { justify-content: flex-start; color: #757575; gap: 8px; padding-left: 7px; height: 41px; }
.feats svg { width: 23px; height: 24px; }
.feats .line { display: flex; align-items: center; gap: 8px; background: #2d8ceb; color: #fff; width: 90px; height: 40px; padding-left: 8px; font-size: 22px; }
.feats i { width: 37px; height: 37px; background: #979690; }
.gfoot { position: relative; display: grid; grid-template-columns: repeat(13, 1fr); width: 100%; padding: 0 530px 0 11px; height: 45px; place-items: center; border-top: 2px solid #282828; flex: none; color: #b8b8b8; }
.gfoot > svg { width: 26px; height: 25px; }
.popup { position: absolute; left: 16px; bottom: 39px; width: 395px; height: 166px; margin: 0; padding: 16px 29px 12px; background: #282828; font-size: 20px; color: #c8c8c8; list-style: none; display: grid; grid-auto-rows: 1fr; z-index: 1; }
.popup li { display: flex; align-items: center; }
.popup svg { width: 22px; height: 21px; margin-right: 22px; }
.popup .wide { width: 34px; margin-right: 10px; }

/* timeline */
.timeline { display: grid; grid-template-columns: 2067fr 2029fr; background: #1e1e1e; border-top: 3px solid #4a90e2; border-left: 3px solid #4a90e2; min-height: 0; }
.tl-left { display: flex; flex-direction: column; min-width: 0; border-right: 2px solid #000; }
.tl-left .on { margin-left: 17px; }
.tl-left .x { margin-right: 17px; }
.tl-left .on .sw { margin-right: 19px; }
.tl-left .tabs, .tl-left .tab { height: 39px; padding-top: 0; }
.c2 { margin-left: 65px; gap: 20px; }
.tl-top { display: flex; height: 66px; }
.clock { width: 178px; padding-left: 18px; color: #175a9f; white-space: nowrap; font-size: 18px; }
.clock b { display: block; font: 600 27px/28px "Open Sans", sans-serif; color: #4599f0; margin: 8px 0 0 2px; }
.clock small { font-size: 18px; line-height: 24px; }
.tl-top .search { flex: 1; margin-top: 12px; height: 38px; }
.tl-btns { display: flex; width: 248px; padding: 19px 0 0 23px; gap: 15px; }
.tl-btns svg { width: 28px; height: 26px; }
.lrow { display: grid; grid-template-columns: 119px 61px 59px 366px 304px 218px 30px 296px 380px 1fr; align-items: center; border-bottom: 2px solid #111; min-height: 0; }
.head { height: 35px; border-top: 2px solid #111; flex: none; }
.head > div { height: 24px; }
.head .num, .head .nm, .head .lab, .head .swi, .head .mode, .head .par, .head .ren { border-left: 4px solid #111; }
.rows { display: grid; grid-auto-rows: 1fr; height: 277px; flex: none; }
.layer { background: #303030; }
.av, .swi { display: grid; grid-auto-flow: column; grid-auto-columns: 27px; place-items: center; justify-content: start; align-items: center; }
.av { padding-left: 5px; }
.swi { padding-left: 8px; }
.head .swi { padding-left: 4px; }
.lrow svg { width: 20px; height: 20px; }
.av > *, .swi > * { height: 24px; }
.head .av svg, .head .swi svg { height: 23px; width: 21px; }
.well { width: 23px; height: 24px; background: #151515; border: 1px solid #222; border-radius: 3px; display: grid; place-items: center; }
.faint { background: #2a2a2a; color: #777; }
.dotted { border: 2px dotted #aaa; border-bottom: 0; }
.solid { border: 0 solid #ccc; border-width: 0 2px; }
.swi > .solid { height: 29px; }
.well.dotted svg { width: 17px; height: 19px; }
.well.solid svg { width: 17px; }
.lab { display: flex; align-items: center; gap: 6px; padding-left: 7px; }
.lab svg { width: 20px; height: 18px; }
.head .lab { padding-left: 24px; }
.head .lab svg { width: 23px; height: 24px; }
.lab .sw { width: 22px; height: 24px; border: 0; }
.num { padding-left: 12px; }
.head .num, .head .nm { padding-left: 7px; }
.nm { display: flex; align-items: center; gap: 10px; padding-left: 7px; }
.nm svg { margin: 0 1px; }
.lrow .cic { width: 28px; height: 26px; margin: 0 -3px; }
.null { width: 22px; height: 26px; background: #fff; border: 2px solid #111; }
.mode { padding-left: 7px; }
.lrow select { height: 27px; padding-left: 14px; border-radius: 6px; }
.mode select { width: 205px; }
.tt { padding-left: 4px; }
.head .tt { padding-left: 9px; }
.trk { display: flex; align-items: center; padding-left: 7px; gap: 8px; }
.trk select { width: 205px; }
.head .trk { padding: 0 4px 0 11px; gap: 5px; }
.head .trk span { flex: 1; }
.head .trk svg { width: 21px; height: 21px; }
.par { display: flex; align-items: center; padding-left: 13px; gap: 12px; }
.head .par { padding-left: 9px; }
.par select { width: 329px; }
.ren { display: flex; align-items: center; color: #5ed8b1; padding-left: 60px; }
.head .ren { color: #b4b4b4; padding-left: 8px; }
.ren span { width: 35px; text-align: right; margin-right: 20px; }
.ren i { height: 24px; background: #5ed8b1; }
.lrow > .prop { grid-column: 2 / 5; display: flex; align-items: center; gap: 13px; padding-left: 71px; }
.prop svg { height: 18px; }
.lrow > .sub { padding-left: 128px; gap: 12px; }
.lrow > .sub svg { width: 22px; height: 23px; }
.val { grid-column: 5 / 9; color: #4594e8; padding-left: 8px; }
.prop ~ .ren { grid-column: 10; }
.whip { grid-column: 9; padding-left: 37px; }
.lrow .whip svg { width: 22px; height: 20px; }

.tl-right { display: flex; flex-direction: column; position: relative; overflow: hidden; min-width: 0; padding-top: 49px; }
.nav { height: 20px; border: 2px solid #000; border-right: 0; background: #737373; margin-left: 11px; flex: none; }
.nav i, .work i { display: block; width: 11px; height: 100%; background: #4599f0; border-radius: 8px 0 0 8px; margin-left: -13px; }
.ruler { display: grid; grid-template-columns: repeat(17, 1fr); margin: 0 -58px 0 -51px; height: 32px; text-align: center; color: #c0c0c0; flex: none; line-height: 26px; background: #202020; }
.ruler span { background: linear-gradient(#aaa, #aaa) bottom / 2px 9px no-repeat; }
.work { height: 32px; border: 2px solid #000; border-right: 0; background: #6a6a6a; margin-left: 11px; flex: none; }
.cache { height: 7px; border-bottom: 2px solid #111; margin-left: 12px; background: #10c420; flex: none; }
.tracks { background: #262626; padding-left: 12px; }
.tracks > div { border-bottom: 2px solid #111; position: relative; }
.t-red { background: #7a3635; }
.t-blue { background: #505a8e; }
.t-tan { background: #716856; }
.tracks svg { position: absolute; top: 50%; width: 18px; height: 18px; margin: -9px; }
.ibeam { position: absolute; top: 7px; width: 12px; height: 17px; margin-left: -6px; border: 2px solid #b4b4b4; border-width: 2px 0; background: linear-gradient(#b4b4b4, #b4b4b4) center / 6px 100% no-repeat; }
.below { flex: 1; background: #262626; margin-left: 12px; }
.playhead { position: absolute; inset: 76px 0 0 12px; }
.playhead i { position: absolute; top: 0; bottom: 0; width: 20px; margin-left: -10px; background: linear-gradient(#4599f0, #4599f0) center / 2px 100% no-repeat; }
.playhead i::before { content: ""; position: absolute; inset: 0 0 auto; height: 26px; background: #4599f0; clip-path: polygon(0 0, 100% 0, 100% 55%, 55% 100%, 45% 100%, 0 55%); }
```
